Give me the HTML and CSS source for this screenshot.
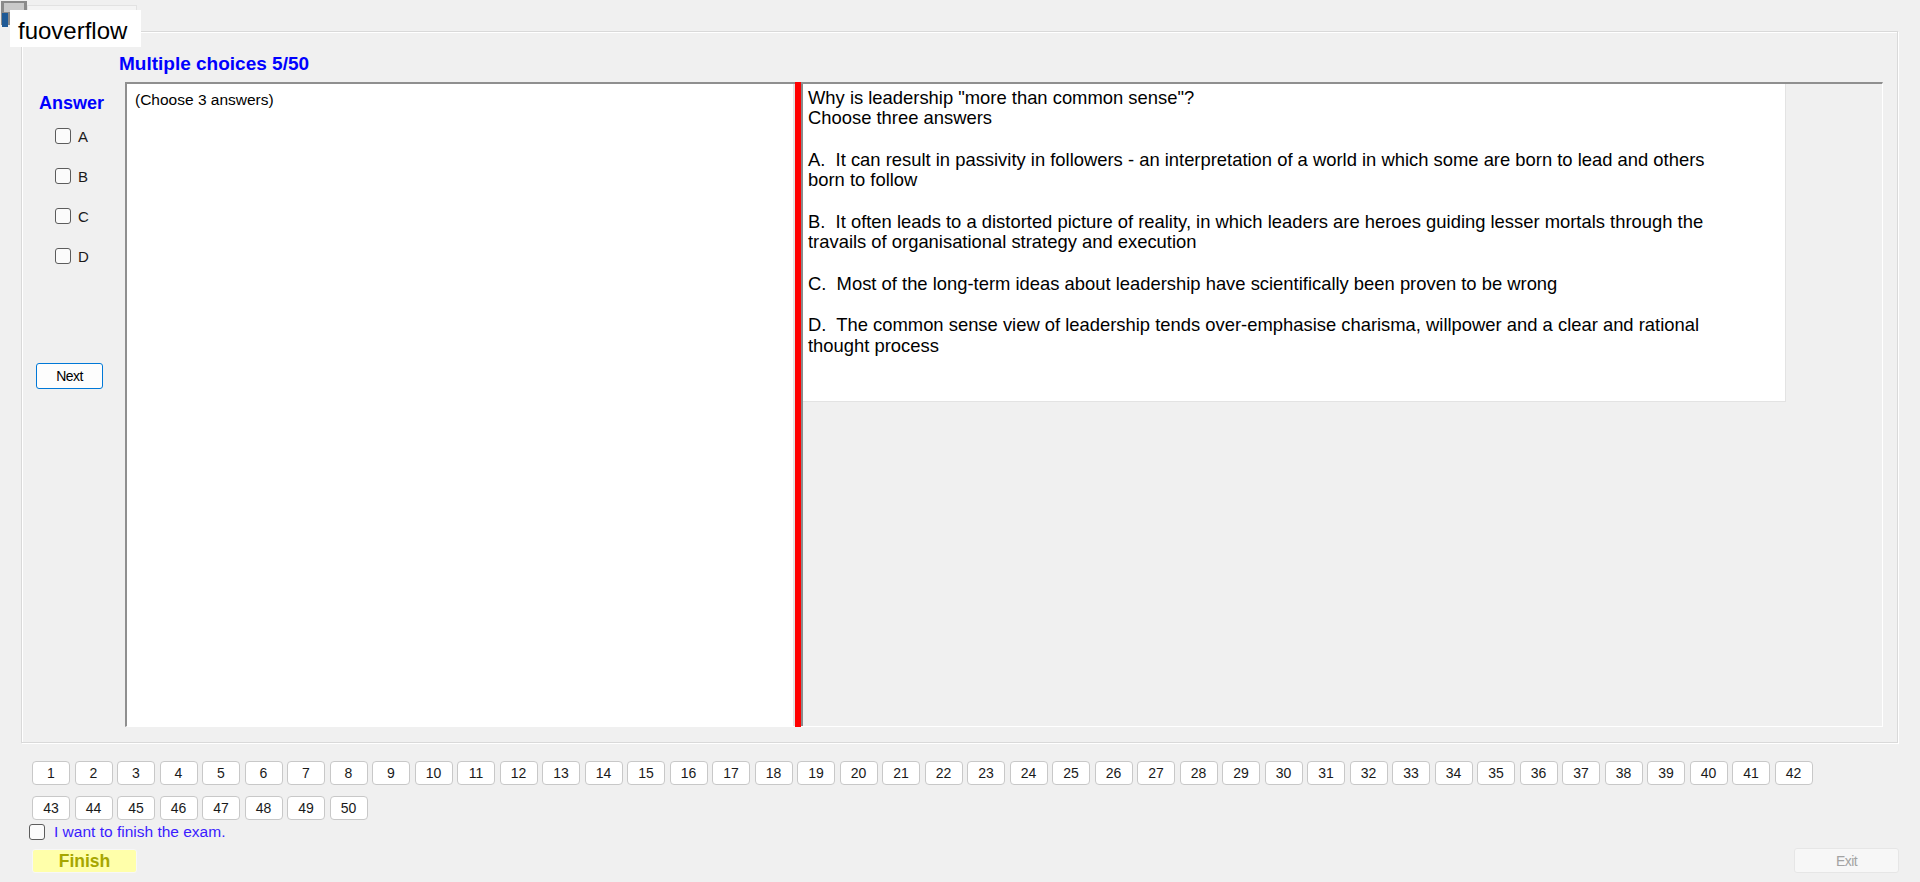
FILE: index.html
```html
<!DOCTYPE html>
<html lang="en">

<head>
    <meta charset="UTF-8">
    <meta name="viewport" content="width=device-width, initial-scale=1.0">
    <title>Exam</title>
    <link rel="stylesheet" href="styles.css">
</head>

<body>

    <!-- window icon + label laid over the form -->
    <svg class="app-icon" width="28" height="28" viewBox="0 0 28 28">
        <rect x="1" y="1" width="26" height="24" fill="#8a8a8a" />
        <rect x="4" y="3" width="20" height="9" fill="#c9c9c9" />
        <rect x="2" y="13" width="6" height="14" fill="#1f5a96" />
    </svg>
    <div class="title-ghost"></div>
    <div class="brand">fuoverflow</div>

    <div class="group">
        <div class="group-title">Multiple choices 5/50</div>

        <div class="content">
            <div class="sidebar">
                <div class="answer-title">Answer</div>
                <div class="options">
                    <label class="option"><input type="checkbox"> A</label>
                    <label class="option"><input type="checkbox"> B</label>
                    <label class="option"><input type="checkbox"> C</label>
                    <label class="option"><input type="checkbox"> D</label>
                </div>
                <button class="next-btn">Next</button>
            </div>

            <div class="split">
                <div class="left-pane">(Choose 3 answers)</div>
                <div class="splitter"></div>
                <div class="right-pane">
                    <div class="question">
                        <p>Why is leadership "more than common sense"?<br>Choose three answers</p>
                        <p>A.&nbsp; It can result in passivity in followers - an interpretation of a world in which some are born to lead and others born to follow</p>
                        <p>B.&nbsp; It often leads to a distorted picture of reality, in which leaders are heroes guiding lesser mortals through the travails of organisational strategy and execution</p>
                        <p>C.&nbsp; Most of the long-term ideas about leadership have scientifically been proven to be wrong</p>
                        <p>D.&nbsp; The common sense view of leadership tends over-emphasise charisma, willpower and a clear and rational thought process</p>
                    </div>
                </div>
            </div>
        </div>
    </div>

    <div class="pages" id="pages"></div>

    <label class="finish-check"><input type="checkbox"> I want to finish the exam.</label>

    <div class="actions">
        <button class="finish-btn">Finish</button>
        <button class="exit-btn" disabled>Exit</button>
    </div>

    <script>
        const pages = document.getElementById('pages');
        for (let i = 1; i <= 50; i++) {
            const btn = document.createElement('button');
            btn.className = 'page-btn';
            btn.textContent = i;
            pages.appendChild(btn);
        }
    </script>

</body>

</html>
```

FILE: styles.css
```css
body {
    margin: 0;
    background-color: #f0f0f0;
    color: #000000;
    font-family: "Liberation Sans", Arial, sans-serif;
}

button {
    font-family: inherit;
    padding: 0;
    cursor: pointer;
}

input[type="checkbox"] {
    appearance: none;
    width: 16px;
    height: 16px;
    margin: 0;
    border: 1px solid #5c5c5c;
    border-radius: 3px;
    background-color: #fbfbfb;
    flex-shrink: 0;
}

/* overlay at the top left */
.app-icon {
    position: absolute;
    left: 0;
    top: 0;
}

.title-ghost {
    position: absolute;
    left: 27px;
    top: 5px;
    width: 108px;
    height: 28px;
    border: 1px solid #e2e2e2;
    background-color: #f4f4f4;
}

.brand {
    position: absolute;
    left: 10px;
    top: 10px;
    width: 131px;
    height: 37px;
    box-sizing: border-box;
    padding: 3px 0 0 8px;
    background-color: #ffffff;
    font-size: 24px;
    line-height: 35px;
}

/* main group box */
.group {
    margin: 31px 22px 0 21px;
    height: 712px;
    box-sizing: border-box;
    border: 1px solid #d9d9d9;
    box-shadow: inset 1px 1px 0 #ffffff, 1px 1px 0 #ffffff;
    padding: 21px 14px 0 0;
}

.group-title {
    margin: 0 0 7px 97px;
    font-size: 19px;
    line-height: 22px;
    font-weight: bold;
    color: #0000ff;
}

.content {
    display: flex;
    height: 645px;
}

.sidebar {
    width: 103px;
    flex-shrink: 0;
    padding-top: 10px;
    box-sizing: border-box;
}

.answer-title {
    margin-left: 17px;
    font-size: 18px;
    line-height: 22px;
    font-weight: bold;
    color: #0000ff;
}

.options {
    display: flex;
    flex-direction: column;
    gap: 24px;
    margin: 14px 0 0 33px;
}

.option {
    display: flex;
    align-items: center;
    gap: 7px;
    height: 16px;
    font-size: 15px;
    color: #1a1a1a;
}

.next-btn {
    margin: 99px 0 0 14px;
    width: 67px;
    height: 26px;
    border: 1px solid #0078d7;
    border-radius: 3px;
    background-color: #fdfdfd;
    font-size: 14px;
    letter-spacing: -0.6px;
    color: #000000;
}

.split {
    display: flex;
    flex: 1;
    border-style: solid;
    border-width: 2px 1px 1px 2px;
    border-color: #8f8f8f #ffffff #ffffff #8f8f8f;
}

.left-pane {
    width: 658px;
    flex-shrink: 0;
    background-color: #ffffff;
    border-right: 2px solid #e3e3e3;
    padding: 7px 0 0 8px;
    font-size: 15.5px;
    line-height: 18px;
}

.splitter {
    width: 6px;
    flex-shrink: 0;
    margin: -2px 0 -1px;
    background-color: #ff0000;
}

.right-pane {
    flex: 1;
    border-left: 2px solid #8a8a8a;
    background-color: #f0f0f0;
}

.question {
    width: 983px;
    height: 318px;
    box-sizing: border-box;
    padding: 3.5px 58px 0 5px;
    background-color: #ffffff;
    border-right: 1px solid #e3e3e3;
    border-bottom: 1px solid #e3e3e3;
    font-size: 18.4px;
    line-height: 20.7px;
}

.question p {
    margin: 0 0 20.7px;
}

/* question number buttons */
.pages {
    display: flex;
    flex-wrap: wrap;
    gap: 11px 4.5px;
    width: 1800px;
    margin: 18px 0 0 32px;
}

.page-btn {
    width: 38px;
    height: 24px;
    box-sizing: border-box;
    border: 1px solid #c8c8c8;
    border-radius: 4px;
    background-color: #ffffff;
    font-size: 14px;
    color: #1a1a1a;
}

.finish-check {
    display: flex;
    align-items: center;
    gap: 9px;
    height: 16px;
    margin: 4px 0 0 29px;
    font-size: 15.5px;
    color: #3a1cff;
}

.actions {
    display: flex;
    justify-content: space-between;
    align-items: flex-start;
    margin: 8px 21px 0 32px;
}

.finish-btn {
    margin-top: 1px;
    width: 105px;
    height: 24px;
    border: 1px solid #f7f7f7;
    border-radius: 3px;
    background-color: #ffffaa;
    color: #a6a600;
    font-size: 17.5px;
    font-weight: bold;
}

.exit-btn {
    width: 105px;
    height: 25px;
    border: 1px solid #e6e6e6;
    border-radius: 3px;
    background-color: #f7f7f7;
    color: #a3a3a3;
    font-size: 14px;
    letter-spacing: -0.6px;
    cursor: default;
}
```
